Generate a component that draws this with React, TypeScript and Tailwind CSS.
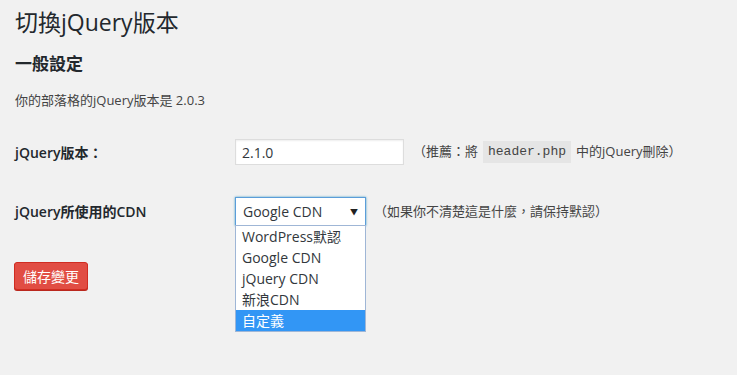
import * as React from 'react'

const font = "font-['Open_Sans','Noto_Sans_CJK_TC',sans-serif]"

const options = ['WordPress默認', 'Google CDN', 'jQuery CDN', '新浪CDN', '自定義']

function CdnSelect() {
  const [selected] = React.useState('Google CDN')
  const highlighted = '自定義'

  return (
    <div className="relative">
      <div className="flex h-[29px] w-[131px] items-center justify-between border border-[#5b9dd9] bg-white pl-[7px] pr-[7px] text-[14px] text-[#32373c] shadow-[0_0_2px_rgba(30,140,190,0.8)]">
        <span>{selected}</span>
        <span className="text-[8px] text-[#222]">▼</span>
      </div>
      <ul className="absolute left-0 top-[28px] z-10 w-[131px] border border-[#9fb6d6] bg-white text-[14px] text-[#32373c]">
        {options.map(opt => (
          <li
            key={opt}
            className={
              opt === highlighted
                ? 'h-[21px] bg-[#3296f5] pl-[6px] leading-[21px] text-white'
                : 'h-[21px] pl-[6px] leading-[21px]'
            }
          >
            {opt}
          </li>
        ))}
      </ul>
    </div>
  )
}

export default function App() {
  return (
    <div className={`min-h-[375px] w-full bg-[#f1f1f1] pl-[15px] pt-[8px] text-[13px] text-[#444] ${font}`}>
      <h1 className="text-[23px] leading-[29px] font-normal text-[#23282d]">
        切換jQuery版本
      </h1>

      <h2 className="mt-[16px] text-[17px] leading-[22px] font-semibold text-[#23282d]">
        一般設定
      </h2>

      <p className="mt-[15px] leading-[20px]">
        你的部落格的jQuery版本是 2.0.3
      </p>

      <div className="mt-[29px] flex items-center">
        <label className="w-[220px] text-[14px] font-semibold text-[#23282d]">
          jQuery版本：
        </label>
        <input
          className="h-[26px] w-[169px] border border-[#ddd] bg-white px-[6px] text-[14px] text-[#32373c] shadow-[inset_0_1px_2px_rgba(0,0,0,0.07)] outline-none"
          defaultValue="2.1.0"
        />
        <span className="ml-[9px] flex items-center">
          （推薦：將
          <code className="mx-[5px] bg-[#e5e5e5] px-[5px] py-[3px] font-['Liberation_Mono',monospace] text-[13px] leading-[16px]">
            header.php
          </code>
          中的jQuery刪除）
        </span>
      </div>

      <div className="mt-[32px] flex items-center">
        <label className="w-[220px] text-[14px] font-semibold text-[#23282d]">
          jQuery所使用的CDN
        </label>
        <CdnSelect />
        <span className="ml-[8px]">（如果你不清楚這是什麼，請保持默認）</span>
      </div>

      <button className="mt-[36px] ml-[-1px] h-[28px] w-[74px] rounded-[3px] border border-[#d02c21] bg-[#e14d43] text-[14px] text-white shadow-[0_1px_0_#ba281e]">
        儲存變更
      </button>
    </div>
  )
}
